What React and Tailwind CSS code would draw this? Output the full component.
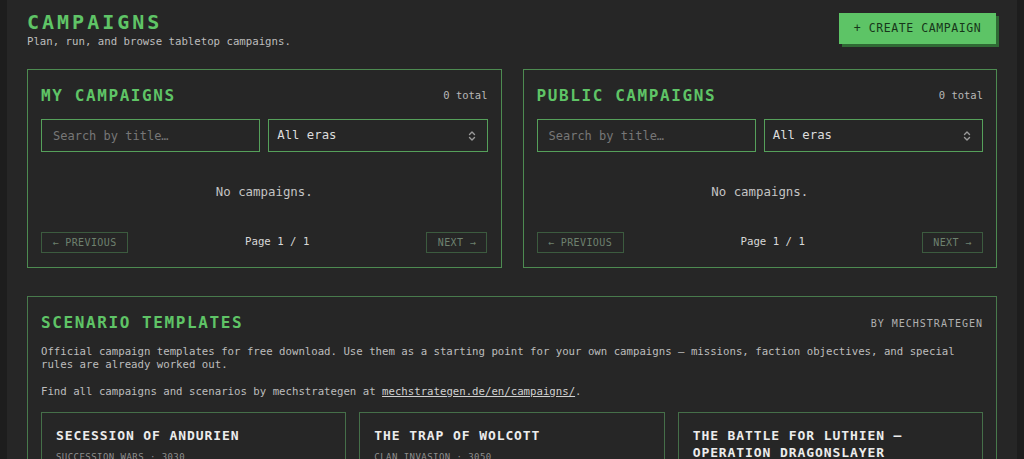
import React from "react";

const mono = { fontFamily: '"DejaVu Sans Mono", "Liberation Mono", monospace' };

function Chevrons() {
  return (
    <svg width="10" height="12" viewBox="0 0 10 12" fill="none" stroke="#9a9a9a" strokeWidth="1.4" strokeLinecap="round" strokeLinejoin="round">
      <path d="M2.5 4.5 L5 2 L7.5 4.5" />
      <path d="M2.5 7.5 L5 10 L7.5 7.5" />
    </svg>
  );
}

function CampaignPanel({ title }) {
  return (
    <div className="border border-[#4d8b51] bg-[#262626] px-[13px] pt-[13px] pb-[14px]">
      <div className="flex items-center justify-between h-[26px]">
        <h2 className="text-[16px] font-bold tracking-[0.1em] text-[#5fc466] leading-[26px]">{title}</h2>
        <span className="text-[10.5px] text-[#b8b8b8]">0 total</span>
      </div>
      <div className="mt-[10px] grid grid-cols-2 gap-[8px]">
        <div className="h-[33px] border border-[#55a05a] flex items-center px-[11px]">
          <span className="text-[12px] text-[#777777]">Search by title…</span>
        </div>
        <div className="h-[33px] border border-[#55a05a] flex items-center justify-between pl-[8px] pr-[10px]">
          <span className="text-[12.3px] text-[#dcdcdc]">All eras</span>
          <Chevrons />
        </div>
      </div>
      <div className="h-[80px] flex items-center justify-center">
        <span className="text-[12.4px] text-[#c4c4c4]">No campaigns.</span>
      </div>
      <div className="flex items-center justify-between h-[21px]">
        <div className="h-[21px] w-[87px] border border-[#3c5b3f] flex items-center justify-center text-[10px] tracking-[0.04em] text-[#6e816f]">
          ← PREVIOUS
        </div>
        <span className="text-[10.7px] text-[#d8d8d8]">Page 1 / 1</span>
        <div className="h-[21px] w-[61px] border border-[#3c5b3f] flex items-center justify-center text-[10px] tracking-[0.04em] text-[#6e816f]">
          NEXT →
        </div>
      </div>
    </div>
  );
}

function Card({ title, sub }) {
  return (
    <div className="border border-[#456f49] bg-[#262626] px-[14px] pt-[14px] pb-[12px] min-h-[80px]">
      <h3 className="text-[13px] font-bold tracking-[0.07em] leading-[17px] text-[#ececec]">{title}</h3>
      {sub && (
        <div className="mt-[7px] text-[9px] tracking-[0.05em] leading-[12px] text-[#8d8d8d]">{sub}</div>
      )}
    </div>
  );
}

export default function App() {
  return (
    <div className="min-h-[459px] w-full bg-[#1d1d1d]" style={mono}>
      <div className="mx-auto w-[1010px] min-h-[459px] bg-[#262626] px-[20px] pt-[10px] pb-[20px]">
        <div className="flex items-start justify-between">
          <div>
            <h1 className="text-[20px] font-bold tracking-[0.15em] leading-[24px] text-[#5fc466]">CAMPAIGNS</h1>
            <p className="mt-[1px] text-[10.7px] leading-[14px] text-[#bdbdbd]">Plan, run, and browse tabletop campaigns.</p>
          </div>
          <button className="mt-[3px] mr-[1px] h-[31px] w-[157px] bg-[#5dc466] text-[#17361a] text-[11.5px] tracking-[0.05em] shadow-[3px_3px_0_#2f6a34] flex items-center justify-center">
            + CREATE CAMPAIGN
          </button>
        </div>

        <div className="mt-[20px] grid grid-cols-2 gap-[21px]">
          <CampaignPanel title="MY CAMPAIGNS" />
          <CampaignPanel title="PUBLIC CAMPAIGNS" />
        </div>

        <div className="mt-[28px] border border-[#487a4c] px-[13px] pt-[13px] pb-[14px]">
          <div className="flex items-center justify-between h-[26px]">
            <h2 className="text-[16px] font-bold tracking-[0.1em] leading-[26px] text-[#5fc466]">SCENARIO TEMPLATES</h2>
            <span className="text-[10px] tracking-[0.1em] text-[#b0b0b0]">BY MECHSTRATEGEN</span>
          </div>
          <p className="mt-[9px] text-[10.7px] leading-[13.3px] text-[#bdbdbd]">
            Official campaign templates for free download. Use them as a starting point for your own campaigns — missions, faction objectives, and special rules are already worked out.
          </p>
          <p className="mt-[13px] text-[10.7px] leading-[13.3px] text-[#bdbdbd]">
            Find all campaigns and scenarios by mechstrategen at{" "}
            <a className="underline text-[#d0d0d0]">mechstrategen.de/en/campaigns/</a>.
          </p>
          <div className="mt-[14px] grid grid-cols-3 gap-[13px]">
            <Card title="SECESSION OF ANDURIEN" sub="SUCCESSION WARS · 3030" />
            <Card title="THE TRAP OF WOLCOTT" sub="CLAN INVASION · 3050" />
            <Card title="THE BATTLE FOR LUTHIEN — OPERATION DRAGONSLAYER" sub="CLAN INVASION · 3052" />
          </div>
        </div>
      </div>
    </div>
  );
}
